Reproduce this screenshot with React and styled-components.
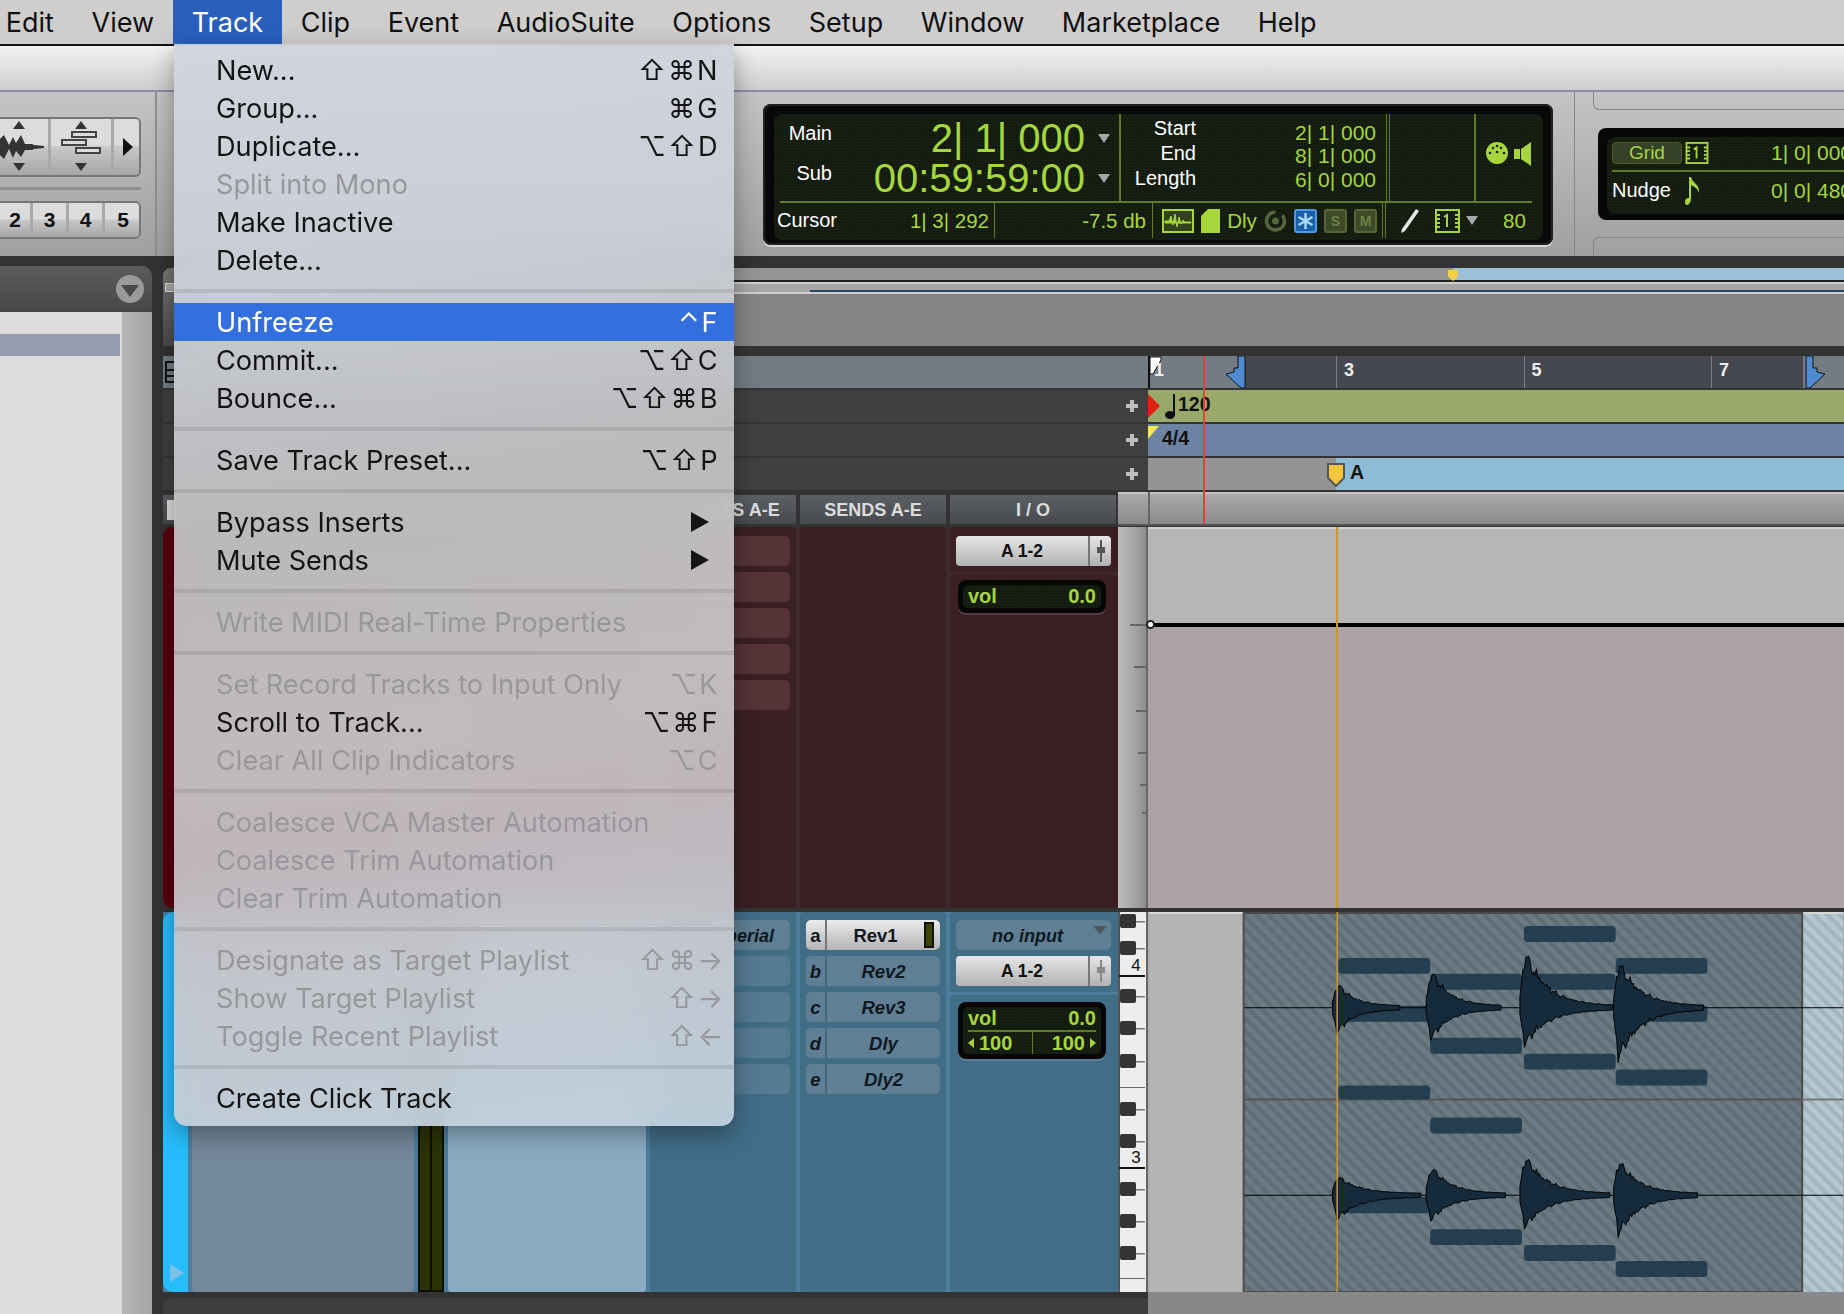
import React from "react";
import styled, { createGlobalStyle } from "styled-components";

const Global = createGlobalStyle`
  html, body { margin: 0; padding: 0; background: #333; }
  * { box-sizing: border-box; }
`;

const LCD_GREEN = "#a6d63c";
const LCD_RULE = "#5f7d1e";
const UI_FONT = `"Inter", "DejaVu Sans", sans-serif`;
const APP_FONT = `"Liberation Sans", Arial, sans-serif`;

const Page = styled.div`
  position: relative;
  width: 1844px;
  height: 1314px;
  overflow: hidden;
  display: flex;
  flex-direction: column;
  background: #333;
  font-family: ${APP_FONT};
`;

/* ---- mac menu bar ---- */
const MenuBar = styled.div`
  height: 46px;
  flex-shrink: 0;
  display: flex;
  margin-left: -13px;
  background: #cfcecd;
  border-bottom: 2px solid #111;
  font-family: ${UI_FONT};
  font-size: 27px;
  color: #111;
`;
const BarItem = styled.div`
  height: 44px;
  line-height: 45px;
  padding: 0 18.8px;
  background: ${(p) => (p.$open ? "#2a5fbd" : "transparent")};
  color: ${(p) => (p.$open ? "#fff" : "#111")};
`;
const TitleStrip = styled.div`
  height: 44px;
  flex-shrink: 0;
  background: linear-gradient(#f3f3f3, #cdcdcd);
`;

/* ---- the toolbar ---- */
const Toolbar = styled.div`
  height: 166px;
  flex-shrink: 0;
  display: flex;
  background: linear-gradient(#c4c4c4, #a0a0a0);
  border-top: 2px solid #8e8ea6;
`;
const Cluster = styled.div`
  width: 157px;
  flex-shrink: 0;
  padding: 25px 14px 0 0;
  border-right: 2px solid #8f8f8f;
  display: flex;
  flex-direction: column;
`;
const ButtonGroup = styled.div`
  display: flex;
  height: ${(p) => p.$h}px;
  border: 2px solid #777;
  border-left: 0;
  border-radius: 0 6px 6px 0;
  overflow: hidden;
`;
const ToolCell = styled.div`
  width: ${(p) => p.$w}px;
  flex-shrink: 0;
  display: flex;
  align-items: center;
  justify-content: ${(p) => (p.$start ? "flex-start" : "center")};
  background: linear-gradient(#dcdcdc 0 46%, #c8c8c8 50%, #a6a6a6);
  border-right: 3px solid #a9a9a9;
  font-size: 21px;
  font-weight: 700;
  color: #111;
  &:last-child { border-right: 0; }
`;
const ClusterRule = styled.div`
  height: 3px;
  margin: 10px 0 11px;
  background: #8f8f8f;
`;

const Counter = styled.div`
  width: 790px;
  height: 141px;
  margin: 12px 0 0 606px;
  flex-shrink: 0;
  padding: 10px 10px 5px 11px;
  background: #080808;
  border-radius: 8px;
  box-shadow: 0 2px 0 #d8d8d8, inset 0 0 0 2px #222;
`;
const LcdFace = styled.div`
  height: 100%;
  border-radius: 8px;
  color: ${LCD_GREEN};
  background-color: #141c10;
  background-image: radial-gradient(rgba(255, 255, 255, 0.05) 1px, transparent 1px);
  background-size: 3px 3px;
`;
const LcdTop = styled.div`
  display: flex;
  height: 89px;
  margin: 0 11px 0 6px;
  border-bottom: 2px solid ${LCD_RULE};
`;
const MainCol = styled.div`
  width: 341px;
  padding-top: 4px;
  border-right: 2px solid ${LCD_RULE};
`;
const MainRow = styled.div`
  display: flex;
  align-items: center;
  height: 40px;
  padding-right: 9px;
`;
const WhiteLabel = styled.div`
  width: ${(p) => p.$w}px;
  flex-shrink: 0;
  text-align: ${(p) => (p.$left ? "left" : "right")};
  font-size: 20px;
  color: #fff;
  margin-bottom: ${(p) => p.$up || 0}px;
`;
const BigValue = styled.div`
  flex: 1;
  text-align: right;
  font-size: 40px;
  white-space: nowrap;
`;
const DownTri = styled.div`
  width: 0;
  height: 0;
  flex-shrink: 0;
  margin-left: ${(p) => p.$ml ?? 13}px;
  border-left: 6px solid transparent;
  border-right: 6px solid transparent;
  border-top: 9px solid #a8a8a8;
`;
const StatCol = styled.div`
  width: 265px;
  padding: 7px 10px 0 0;
`;
const StatRow = styled.div`
  display: flex;
  align-items: center;
  height: 23.5px;
`;
const SmallValue = styled.div`
  flex: 1;
  text-align: right;
  font-size: 21px;
  white-space: nowrap;
`;
const EmptyCol = styled.div`
  width: 90px;
  border-left: 4px double ${LCD_RULE};
  border-right: 2px solid ${LCD_RULE};
`;
const MidiCol = styled.div`
  flex: 1;
  display: flex;
  align-items: flex-start;
  justify-content: flex-end;
  padding: 27px 0 0;
`;
const LcdBottom = styled.div`
  display: flex;
  align-items: center;
  height: 35px;
`;
const BottomCell = styled.div`
  width: ${(p) => p.$w}px;
  flex-shrink: 0;
  height: 100%;
  display: flex;
  align-items: center;
  justify-content: ${(p) => p.$justify || "space-between"};
  padding: ${(p) => p.$pad || "0 5px 0 3px"};
  border-right: ${(p) => (p.$rule ? `${p.$rule} ${LCD_RULE}` : "0")};
`;
const CursorLabel = styled.span`
  font-size: 20px;
  color: #fff;
`;
const CellText = styled.span`
  font-size: 20.5px;
  white-space: nowrap;
  margin-left: ${(p) => p.$ml || 0}px;
`;
const Spaced = styled.span`
  display: flex;
  margin-left: ${(p) => p.$ml || 0}px;
`;
const ModeBox = styled.div`
  width: 23px;
  height: 24px;
  display: flex;
  align-items: center;
  justify-content: center;
  flex-shrink: 0;
  border-radius: 3px;
  font-size: 14px;
  font-weight: 700;
  color: #6f8046;
  background: ${(p) => (p.$on ? "#1b5fa6" : "#3c4a28")};
  border: 2px solid ${(p) => (p.$on ? "#4a9be8" : "#56663a")};
`;

const ToolDivider = styled.div`
  width: 1px;
  margin-left: 21px;
  flex-shrink: 0;
  background: #868686;
`;
const RightCol = styled.div`
  width: 300px;
  margin-left: 18px;
  flex-shrink: 0;
  display: flex;
  flex-direction: column;
  justify-content: space-between;
`;
const Lip = styled.div`
  height: ${(p) => p.$h}px;
  border-left: 1px solid #868686;
  border-top: ${(p) => (p.$lower ? "1px solid #868686" : "0")};
  border-bottom: ${(p) => (p.$lower ? "0" : "1px solid #868686")};
  border-radius: ${(p) => (p.$lower ? "6px 0 0 0" : "0 0 0 6px")};
`;
const GridWell = styled.div`
  width: 270px;
  height: 92px;
  margin-left: 5px;
  padding: 9px 0 6px 9px;
  background: #080808;
  border-radius: 8px;
`;
const GridFace = styled(LcdFace)`
  padding: 0 16px 0 5px;
`;
const GridRow = styled.div`
  display: flex;
  align-items: center;
  gap: 2px;
  height: ${(p) => p.$h}px;
  border-bottom: ${(p) => (p.$rule ? `2px solid ${LCD_RULE}` : "0")};
`;
const GridPill = styled.div`
  width: 70px;
  height: 22px;
  line-height: 20px;
  text-align: center;
  font-size: 19px;
  border: 1px solid #4d5f2c;
  border-radius: 4px;
  background: #364228;
`;

/* ---- workspace ---- */
const Workspace = styled.div`
  flex: 1;
  display: flex;
  min-height: 0;
`;
const LeftPane = styled.div`
  width: 152px;
  flex-shrink: 0;
  padding-top: 10px;
  display: flex;
  flex-direction: column;
`;
const PaneHeader = styled.div`
  height: 46px;
  flex-shrink: 0;
  display: flex;
  align-items: center;
  justify-content: flex-end;
  padding-right: 7px;
  background: linear-gradient(#5c5c5c, #474747);
  border-radius: 0 10px 0 0;
`;
const PaneBody = styled.div`
  flex: 1;
  display: flex;
`;
const PaneList = styled.div`
  width: 122px;
  padding-top: 22px;
  background: #dcdcdc;
`;
const PaneRowSelected = styled.div`
  height: 22px;
  width: 120px;
  background: #949cae;
`;
const PaneGutter = styled.div`
  flex: 1;
  background: linear-gradient(90deg, #b4b4b4, #a6a6a6);
`;
const EditPane = styled.div`
  flex: 1;
  min-width: 0;
  padding: 12px 0 0 11px;
  display: flex;
  flex-direction: column;
`;
const TransportArea = styled.div`
  display: flex;
  height: 78px;
  flex-shrink: 0;
`;
const CornerBox = styled.div`
  width: 30px;
  flex-shrink: 0;
  padding: 15px 0 0 2px;
  background: linear-gradient(#777, #4a4a4a);
  border-radius: 8px 0 0 0;
`;
const CornerSwatch = styled.div`
  width: 14px;
  height: 9px;
  background: #a9a9a9;
  border: 1px solid #ddd;
`;
const TransportStack = styled.div`
  flex: 1;
  display: flex;
  flex-direction: column;
`;
const Overview = styled.div`
  height: 14px;
  flex-shrink: 0;
  display: flex;
  border-bottom: 2px solid #222;
`;
const OverviewPlain = styled.div`
  width: 1260px;
  background: #959595;
`;
const OverviewSel = styled.div`
  position: relative;
  flex: 1;
  background: #9cc0d8;
`;
const OverviewPin = styled.div`
  position: absolute;
  left: -5px;
  top: 2px;
  width: 10px;
  height: 11px;
  background: #f2cf45;
  clip-path: polygon(0 0, 100% 0, 100% 60%, 50% 100%, 0 60%);
`;
const ScrollStrip = styled.div`
  height: 12px;
  flex-shrink: 0;
  padding-left: 617px;
  border-top: 2px solid #cfcfcf;
  border-bottom: 2px solid #cfcfcf;
  background: #a6a6a6;
  display: flex;
  align-items: flex-end;
`;
const ScrollThumb = styled.div`
  flex: 1;
  height: 2px;
  background: #274a60;
`;
const GrayFill = styled.div`
  flex: 1;
  background: #848484;
`;
const RulerBlock = styled.div`
  position: relative;
  margin-top: 10px;
  flex-shrink: 0;
`;
const PlayLine = styled.div`
  position: absolute;
  left: 1040px;
  top: 0;
  bottom: 2px;
  width: 1.5px;
  background: #d9453a;
  z-index: 3;
`;
const RulerRow = styled.div`
  display: flex;
  height: 32px;
  margin-bottom: 2px;
`;
const RulerLabel = styled.div`
  width: 985px;
  flex-shrink: 0;
  display: flex;
  align-items: center;
  justify-content: flex-end;
  padding-right: 10px;
  background: ${(p) => p.$bg};
`;
const ViewGlyph = styled.div`
  width: 11px;
  height: 22px;
  margin: 0 auto 0 2px;
  border: 2px solid #111;
  background:
    linear-gradient(#111, #111) 0 6px / 100% 2px no-repeat,
    linear-gradient(#111, #111) 0 12px / 100% 2px no-repeat;
`;
const PlusMark = styled.div`
  width: 12px;
  height: 12px;
  background:
    linear-gradient(#bdbdbd, #bdbdbd) center / 12px 4px no-repeat,
    linear-gradient(#bdbdbd, #bdbdbd) center / 4px 12px no-repeat;
`;
const Lane = styled.div`
  position: relative;
  flex: 1;
  background: ${(p) => p.$bg};
  color: #111;
`;
const LaneFill = styled.div`
  position: absolute;
  top: 0;
  bottom: 0;
  left: ${(p) => p.$left}px;
  width: ${(p) => p.$w}px;
  background: ${(p) => p.$bg};
`;
const BarTick = styled.div`
  position: absolute;
  top: 0;
  bottom: 0;
  left: ${(p) => p.$left}px;
  padding: 4px 0 0 ${(p) => (p.$first ? 4 : 7)}px;
  border-left: ${(p) => (p.$first ? "0" : "1px solid #7a7f85")};
  font-size: 18px;
  font-weight: 700;
  color: #eee;
`;
const LaneText = styled.div`
  position: absolute;
  top: 3px;
  left: ${(p) => p.$left}px;
  font-size: 19.5px;
  font-weight: 700;
  color: #111;
`;
const LaneIcon = styled.svg`
  position: absolute;
  left: ${(p) => p.$left}px;
  top: ${(p) => p.$top}px;
`;

const HeaderRow = styled.div`
  display: flex;
  height: 34px;
`;
const HeaderCells = styled.div`
  width: 955px;
  flex-shrink: 0;
  display: flex;
  gap: 4px;
  padding: 3px 2px 2px 0;
  background: #333;
`;
const HeaderCell = styled.div`
  width: ${(p) => p.$w}px;
  flex: ${(p) => (p.$w ? "none" : 1)};
  display: flex;
  align-items: center;
  justify-content: center;
  padding-top: 1px;
  background: linear-gradient(#5c6064, #46494d);
  font-size: 18px;
  font-weight: 700;
  color: #dcdcdc;
`;
const HeaderBox = styled.div`
  width: 9px;
  height: 20px;
  margin-right: 8px;
  background: #ddd;
`;
const HeaderTimeline = styled.div`
  flex: 1;
  padding-left: 30px;
  background: linear-gradient(#c6c6c6 0 4%, #a9a9a9 8%, #8a8a8a);
  border-bottom: 2px solid #555;
`;
const HeaderTimelineInner = styled.div`
  height: 100%;
  border-left: 2px solid #666;
`;

const Tracks = styled.div`
  flex: 1;
  min-height: 0;
  display: flex;
  flex-direction: column;
  gap: 4px;
  margin-top: 1px;
`;
const TrackRow = styled.div`
  height: ${(p) => p.$h}px;
  flex-shrink: 0;
  display: flex;
`;
const Strip = styled.div`
  width: 955px;
  flex-shrink: 0;
  display: flex;
  gap: 4px;
  padding-right: 2px;
  background: ${(p) => p.$gap};
`;
const ColorTab = styled.div`
  position: relative;
  width: 25px;
  flex-shrink: 0;
  background: ${(p) => p.$bg};
  border-radius: 10px 0 0 10px;
`;
const TabArrow = styled.div`
  position: absolute;
  left: 7px;
  bottom: 10px;
  width: 0;
  height: 0;
  border-top: 9px solid transparent;
  border-bottom: 9px solid transparent;
  border-left: 14px solid #7cc0e8;
`;
const StripCol = styled.div`
  width: ${(p) => p.$w}px;
  flex: ${(p) => (p.$w ? "none" : 1)};
  display: flex;
  flex-direction: column;
  gap: 6px;
  padding: ${(p) => p.$pad || "0"};
  background: ${(p) => p.$bg};
  border-radius: 4px;
`;
const MeterCol = styled.div`
  width: 26px;
  flex-shrink: 0;
  display: flex;
  border: 2px solid #0c1000;
  background: #2a3308;
`;
const MeterDivider = styled.div`
  width: 2px;
  margin-left: 10px;
  background: #0c1000;
`;
const Slot = styled.div`
  height: 30px;
  flex-shrink: 0;
  padding-right: 16px;
  border-radius: 5px;
  background: ${(p) => p.$bg};
  text-align: right;
  line-height: 32px;
  font-size: 18px;
  font-weight: 700;
  font-style: italic;
  color: #101820;
`;
const SendRow = styled.div`
  height: 30px;
  flex-shrink: 0;
  display: flex;
  border-radius: 5px;
  overflow: hidden;
  background: ${(p) => (p.$on ? "linear-gradient(#ececec, #b4b4b4)" : "#5f7f94")};
  font-size: 18.5px;
  font-weight: 700;
  font-style: ${(p) => (p.$on ? "normal" : "italic")};
  color: #101820;
`;
const SendLetter = styled.div`
  width: 21px;
  flex-shrink: 0;
  text-align: center;
  line-height: 32px;
  border-right: 2px solid ${(p) => (p.$on ? "#777" : "#47677c")};
`;
const SendName = styled.div`
  flex: 1;
  text-align: center;
  line-height: 32px;
`;
const SendGauge = styled.div`
  width: 10px;
  margin: 2px 6px 2px 0;
  flex-shrink: 0;
  background: #3a4405;
  border: 2px solid #111;
`;
const IoStack = styled.div`
  width: 168px;
  flex-shrink: 0;
  display: flex;
  flex-direction: column;
  gap: 3px;
`;
const IoPanel = styled.div`
  flex: ${(p) => (p.$grow ? 1 : "none")};
  display: flex;
  flex-direction: column;
  gap: 6px;
  padding: ${(p) => p.$pad};
  background: ${(p) => p.$bg};
  border-radius: 4px;
`;
const InputCell = styled.div`
  position: relative;
  height: 30px;
  flex-shrink: 0;
  border-radius: 5px;
  background: #5f7f94;
  padding-right: 12px;
  text-align: center;
  line-height: 32px;
  font-size: 18px;
  font-weight: 700;
  font-style: italic;
  color: #101820;
`;
const InputTri = styled.div`
  position: absolute;
  top: 6px;
  right: 4px;
  width: 0;
  height: 0;
  border-left: 7px solid transparent;
  border-right: 7px solid transparent;
  border-top: 8px solid #444;
  opacity: 0.7;
`;
const OutputButton = styled.div`
  height: 30px;
  flex-shrink: 0;
  display: flex;
  border-radius: 4px;
  overflow: hidden;
  background: linear-gradient(#e6e6e6, #b2b2b2);
  font-size: 17.5px;
  font-weight: 700;
  color: #111;
`;
const OutputName = styled.div`
  flex: 1;
  text-align: center;
  line-height: 30px;
  border-right: 2px solid #777;
`;
const OutputFader = styled.div`
  width: 21px;
  display: flex;
  align-items: center;
  justify-content: center;
`;
const VolLcd = styled.div`
  width: 148px;
  margin-left: 2px;
  padding: 5px;
  flex-shrink: 0;
  background: #060606;
  border-radius: 8px;
  box-shadow: 0 2px 0 rgba(255, 255, 255, 0.14);
  font-size: 20px;
  font-weight: 700;
`;
const VolFace = styled(LcdFace)`
  padding: 0 5px;
  border-radius: 5px;
`;
const VolRow = styled.div`
  display: flex;
  align-items: center;
  justify-content: space-between;
  height: ${(p) => p.$h}px;
  border-top: ${(p) => (p.$rule ? `2px solid ${LCD_RULE}` : "0")};
`;
const PanSide = styled.div`
  flex: 1;
  display: flex;
  align-items: center;
  justify-content: ${(p) => (p.$right ? "flex-end" : "flex-start")};
  gap: 5px;
  height: 100%;
  border-left: ${(p) => (p.$right ? `1px solid ${LCD_RULE}` : "0")};
`;
const PanArrow = styled.span`
  width: 0;
  height: 0;
  border-top: 5px solid transparent;
  border-bottom: 5px solid transparent;
  border-left: ${(p) => (p.$right ? `6px solid ${LCD_GREEN}` : "0")};
  border-right: ${(p) => (p.$right ? "0" : `6px solid ${LCD_GREEN}`)};
`;
const SideColumn = styled.div`
  width: 30px;
  flex-shrink: 0;
  background: linear-gradient(90deg, #bdbdbd, #a9a9a9 50%, #8d8d8d);
  border-right: 2px solid #666;
`;
const KeysColumn = styled.div`
  width: 30px;
  flex-shrink: 0;
  background: #eee;
`;
const FlatSvg = styled.svg`
  display: block;
`;

const Playlist = styled.div`
  position: relative;
  flex: 1;
  display: flex;
  flex-direction: column;
  background: #aea1a6;
`;
const PlaylistTop = styled.div`
  height: 96px;
  background: #b6b6b6;
  border-top: 2px solid #d2d2d2;
`;
const AutoLine = styled.div`
  height: 4px;
  background: #000;
`;
const AutoDot = styled.div`
  position: absolute;
  left: -2px;
  top: 93px;
  width: 9px;
  height: 9px;
  border-radius: 50%;
  background: #fff;
  border: 2px solid #222;
`;
const BarLine = styled.div`
  position: absolute;
  left: 188px;
  top: 0;
  bottom: 0;
  width: 1.5px;
  background: #c9982e;
`;
const Footer = styled.div`
  height: 22px;
  flex-shrink: 0;
  display: flex;
`;
const FooterLeft = styled.div`
  width: 985px;
  margin-top: 6px;
  background: #3d3d3d;
  border-radius: 8px 0 0 0;
`;
const FooterRight = styled.div`
  flex: 1;
  background: #888;
`;

/* ---- the open menu ---- */
const Menu = styled.div`
  position: absolute;
  left: 174px;
  top: 44px;
  width: 560px;
  height: 1082px;
  padding: 7px 0 8px;
  z-index: 10;
  border-radius: 0 0 13px 13px;
  font-family: ${UI_FONT};
  font-size: 27.15px;
  background: linear-gradient(
    172deg,
    rgba(208, 212, 221, 0.94) 0%,
    rgba(204, 208, 216, 0.94) 22%,
    rgba(194, 194, 195, 0.94) 42%,
    rgba(201, 197, 199, 0.94) 62%,
    rgba(200, 192, 196, 0.94) 70%,
    rgba(200, 203, 210, 0.94) 84%,
    rgba(193, 210, 222, 0.94) 100%
  );
  backdrop-filter: blur(24px);
  box-shadow: 0 8px 24px rgba(0, 0, 0, 0.35);
`;
const MenuRow = styled.div`
  height: 38px;
  display: flex;
  align-items: center;
  justify-content: space-between;
  padding: 0 8.5px 0 42px;
  white-space: nowrap;
  color: ${(p) => (p.$active ? "#fff" : p.$off ? "#98989c" : "#141414")};
  background: ${(p) => (p.$active ? "#3470dd" : "transparent")};
`;
const Shortcut = styled.span`
  letter-spacing: 2px;
  padding-right: ${(p) => (p.$arrow ? 0 : 6)}px;
`;
const SubArrow = styled.span`
  width: 0;
  height: 0;
  margin-right: 16.5px;
  border-top: 10px solid transparent;
  border-bottom: 10px solid transparent;
  border-left: 18px solid #141414;
`;
const MenuSep = styled.div`
  height: 24px;
  display: flex;
  align-items: center;
  &::after {
    content: "";
    flex: 1;
    height: 4px;
    background: rgba(0, 0, 0, 0.09);
  }
`;

/* ---- drawings ---- */
const WaveIcon = () => (
  <svg width="48" height="56" viewBox="0 0 48 56">
    <path d="M13 10h12l-6-8zM13 44h12l-6 8z" fill="#333" />
    <path d="M-2 22L4 16L9 26L13 18L16 24L21 16L25 25L32 25L34 26L44 27L44 29L34 30L32 31L25 31L21 38L16 32L13 39L9 30L4 40L-2 34Z" fill="#333" />
  </svg>
);
const ArrangeIcon = () => (
  <svg width="60" height="56" viewBox="0 0 60 56">
    <path d="M24 10h12l-6-8zM24 44h12l-6 8z" fill="#333" />
    <g fill="#ddd" stroke="#444" strokeWidth="2">
      <rect x="21" y="13" width="24" height="5" />
      <rect x="11" y="21" width="24" height="5" />
      <rect x="25" y="29" width="24" height="5" />
    </g>
  </svg>
);
const PlayIcon = () => (
  <svg width="12" height="20" viewBox="0 0 12 20"><path d="M1 1l10 9-10 9z" fill="#111" /></svg>
);
const MidiIcon = () => (
  <svg width="24" height="24" viewBox="0 0 24 24">
    <circle cx="12" cy="12" r="11" fill={LCD_GREEN} />
    <g fill="#1a2410">
      <circle cx="5" cy="12" r="1.3" /><circle cx="19" cy="12" r="1.3" />
      <circle cx="8" cy="7" r="1.3" /><circle cx="16" cy="7" r="1.3" />
      <circle cx="12" cy="5" r="1.3" /><circle cx="12" cy="11" r="1.3" />
    </g>
  </svg>
);
const SpeakerIcon = () => (
  <Spaced $ml={5}>
    <svg width="18" height="26" viewBox="0 0 18 26">
      <path d="M0 8h6v10H0zM7 8L17 1v24L7 18z" fill={LCD_GREEN} />
    </svg>
  </Spaced>
);
const ClipWaveIcon = () => (
  <svg width="32" height="24" viewBox="0 0 32 24">
    <rect x="1" y="1" width="30" height="22" fill="#33421c" stroke={LCD_GREEN} strokeWidth="2" />
    <path d="M3 12h4l2-5 2 9 2-11 2 13 2-10 2 7 2-4 2 2h6v1H3z" fill={LCD_GREEN} stroke={LCD_GREEN} />
  </svg>
);
const DocIcon = () => (
  <svg width="19" height="24" viewBox="0 0 19 24"><path d="M7 0h12v24H0V7z" fill={LCD_GREEN} /></svg>
);
const TargetIcon = () => (
  <svg width="23" height="24" viewBox="0 0 23 24">
    <circle cx="11.5" cy="12" r="9" fill="none" stroke="#55663a" strokeWidth="3.5" strokeDasharray="42 8" />
    <circle cx="11.5" cy="12" r="3.5" fill="#55663a" />
  </svg>
);
const FreezeStar = () => (
  <svg width="17" height="18" viewBox="0 0 17 18">
    <path d="M8.5 1v16M1.500 5l14 8M15.500 5l-14 8" stroke="#a8dcff" strokeWidth="2.4" />
  </svg>
);
const PencilIcon = () => (
  <svg width="20" height="26" viewBox="0 0 20 26">
    <path d="M16 1l3 2L5 23l-4 2 1-4z" fill="#e6e6e6" />
  </svg>
);
const FilmIcon = ({ w = 25, h = 24 }) => (
  <svg width={w} height={h} viewBox="0 0 25 24">
    <rect x="1" y="1" width="23" height="22" fill="none" stroke={LCD_GREEN} strokeWidth="2" />
    <path d="M1 6h4M1 10h4M1 14h4M1 18h4M20 6h4M20 10h4M20 14h4M20 18h4M9 8l3-2v12" fill="none" stroke={LCD_GREEN} strokeWidth="2" />
  </svg>
);
const NoteIcon = () => (
  <Spaced $ml={10}>
    <svg width="17" height="30" viewBox="0 0 17 30">
      <path d="M7 1v21c0 4-2 7-4 7s-3-3-1-6c1-1 2-1 3-1V1zM7 1c1 6 9 7 8 16-1-4-4-6-8-8z" fill={LCD_GREEN} />
    </svg>
  </Spaced>
);
const FaderGlyph = ({ c = "#555" }) => (
  <svg width="10" height="22" viewBox="0 0 10 22"><path d="M5 0v22" stroke={c} strokeWidth="2" /><rect x="1" y="7" width="8" height="6" fill={c} /></svg>
);
const ChevronDisc = () => (
  <svg width="30" height="30" viewBox="0 0 30 30">
    <circle cx="15" cy="15" r="14" fill="#9a9a9a" />
    <path d="M6 11h18l-9 12z" fill="#4a4a4a" />
  </svg>
);

const CLIP_NOTES = [
  [190, 46, 16], [376, 14, 16], [468, 46, 16], [282, 62, 16], [376, 62, 16], [190, 94, 16], [468, 94, 16],
  [282, 126, 16], [376, 142, 16], [468, 158, 16], [190, 174, 14], [282, 206, 16], [190, 286, 16],
  [282, 318, 16], [376, 334, 16], [468, 350, 16],
];
const HITS = [
  [184, 96, 22, 22, 68], [278, 96, 34, 28, 76], [372, 96, 52, 34, 94], [466, 96, 42, 47, 90],
  [184, 284, 17, 21, 89], [278, 284, 26, 22, 80], [372, 284, 36, 29, 90], [466, 284, 32, 36, 84],
];
// one drum hit: sharp attack, then an exponential tail with some roughness
function hitPath([x0, cy, up, down, tail]) {
  const top = [];
  const bottom = [];
  const tau = tail / 4.2;
  for (let d = 0; d <= tail; d += 1.5) {
    const env = d < 5 ? (d + 1) / 6 : Math.exp(-(d - 5) / tau);
    const rough = 1 + 0.1 * Math.sin(d * 2.3 + x0) + 0.09 * Math.sin(d * 0.7 + cy) + 0.06 * Math.sin(d * 5.1);
    top.push(`${x0 + d},${(cy - (up * env * rough + 1.8)).toFixed(1)}`);
    bottom.unshift(`${x0 + d},${(cy + (down * env * (2 - rough) + 1.8)).toFixed(1)}`);
  }
  return `M${top.join("L")}L${bottom.join("L")}Z`;
}

const BLACK_KEYS = [10, 37, 85, 117, 150, 198, 230, 278, 310, 342];
const KEY_LINES = [63, 175, 255, 366];

const Keys = () => (
  <FlatSvg width="30" height="380" viewBox="0 0 30 380">
    <rect width="30" height="380" fill="#ededed" />
    <rect x="28" width="2" height="380" fill="#666" />
    <rect width="2" height="380" fill="#555" />
    {KEY_LINES.map((y, i) => (
      <rect key={i} x="1" y={y} width="26" height={i % 2 === 0 ? 2 : 1} fill={i % 2 === 0 ? "#111" : "#666"} />
    ))}
    {BLACK_KEYS.map((y) => (
      <g key={y}>
        <rect x="18" y={y - 1} width="9" height="1.500" fill="#777" />
        <rect x="2" y={y - 8} width="16" height={14} rx="2" fill="#333" />
      </g>
    ))}
    <text x="18" y="59" fontSize="17" textAnchor="middle" fontFamily="Liberation Sans" fill="#111">4</text>
    <text x="18" y="251" fontSize="17" textAnchor="middle" fontFamily="Liberation Sans" fill="#111">3</text>
  </FlatSvg>
);

const ClipView = () => (
  <FlatSvg width="696" height="381" viewBox="0 0 696 381">
    <defs>
      <pattern id="hatchDark" width="9" height="9" patternUnits="userSpaceOnUse" patternTransform="rotate(-45)">
        <rect width="9" height="9" fill="#6b7a83" />
        <rect width="4" height="9" fill="#5f6d76" />
      </pattern>
      <pattern id="hatchLight" width="9" height="9" patternUnits="userSpaceOnUse" patternTransform="rotate(-45)">
        <rect width="9" height="9" fill="#b5c7cf" />
        <rect width="4" height="9" fill="#a0b6c0" />
      </pattern>
    </defs>
    <rect width="696" height="381" fill="#b4b4b4" />
    <rect width="696" height="2" fill="#d8d8d8" />
    <rect x="655" y="2" width="41" height="379" fill="url(#hatchLight)" />
    <rect x="95" y="1" width="560" height="380" fill="url(#hatchDark)" stroke="#4a4a4a" strokeWidth="2" />
    <rect x="655" y="187" width="41" height="2" fill="#777" />
    <rect x="96" y="187" width="559" height="2" fill="#555" />
    {CLIP_NOTES.map(([x, y, h], i) => (
      <rect key={i} x={x} y={y} width="92" height={h} rx="4" fill="#1f3a4d" opacity="0.92" />
    ))}
    <path d="M96 96H696M96 284H696" stroke="#000" strokeWidth="1" />
    {HITS.map((h, i) => (
      <path key={i} d={hitPath(h)} fill="#152b3b" stroke="#000" strokeWidth="1" />
    ))}
    <rect x="188" y="0" width="1.500" height="381" fill="#c9982e" />
  </FlatSvg>
);

const MENU = [
  [["New...", "⇧⌘N"], ["Group...", "⌘G"], ["Duplicate...", "⌥⇧D"], ["Split into Mono", "", "off"], ["Make Inactive"], ["Delete..."]],
  [["Unfreeze", "⌃F", "active"], ["Commit...", "⌥⇧C"], ["Bounce...", "⌥⇧⌘B"]],
  [["Save Track Preset...", "⌥⇧P"]],
  [["Bypass Inserts", ">"], ["Mute Sends", ">"]],
  [["Write MIDI Real-Time Properties", "", "off"]],
  [["Set Record Tracks to Input Only", "⌥K", "off"], ["Scroll to Track...", "⌥⌘F"], ["Clear All Clip Indicators", "⌥C", "off"]],
  [["Coalesce VCA Master Automation", "", "off"], ["Coalesce Trim Automation", "", "off"], ["Clear Trim Automation", "", "off"]],
  [["Designate as Target Playlist", "⇧⌘→", "off"], ["Show Target Playlist", "⇧→", "off"], ["Toggle Recent Playlist", "⇧←", "off"]],
  [["Create Click Track"]],
];
const BAR = ["Edit", "View", "Track", "Clip", "Event", "AudioSuite", "Options", "Setup", "Window", "Marketplace", "Help"];
const SENDS = [["a", "Rev1"], ["b", "Rev2"], ["c", "Rev3"], ["d", "Dly"], ["e", "Dly2"]];

const TrackMenu = () => (
  <Menu>
    {MENU.map((group, g) => (
      <React.Fragment key={g}>
        {g > 0 && <MenuSep />}
        {group.map(([label, keys, state]) => (
          <MenuRow key={label} $off={state === "off"} $active={state === "active"}>
            <span>{label}</span>
            {keys === ">" ? <SubArrow /> : keys ? <Shortcut $arrow={/[→←]/.test(keys)}>{keys}</Shortcut> : null}
          </MenuRow>
        ))}
      </React.Fragment>
    ))}
  </Menu>
);

const MainCounter = () => (
  <Counter>
    <LcdFace>
      <LcdTop>
        <MainCol>
          <MainRow>
            <WhiteLabel $w={52} $up={10}>Main</WhiteLabel>
            <BigValue>2| 1| 000</BigValue>
            <DownTri />
          </MainRow>
          <MainRow>
            <WhiteLabel $w={52} $up={10}>Sub</WhiteLabel>
            <BigValue>00:59:59:00</BigValue>
            <DownTri />
          </MainRow>
        </MainCol>
        <StatCol>
          <StatRow><WhiteLabel $w={75} $up={8}>Start</WhiteLabel><SmallValue>2| 1| 000</SmallValue></StatRow>
          <StatRow><WhiteLabel $w={75} $up={6}>End</WhiteLabel><SmallValue>8| 1| 000</SmallValue></StatRow>
          <StatRow><WhiteLabel $w={75} $up={2}>Length</WhiteLabel><SmallValue>6| 0| 000</SmallValue></StatRow>
        </StatCol>
        <EmptyCol />
        <MidiCol><MidiIcon /><SpeakerIcon /></MidiCol>
      </LcdTop>
      <LcdBottom>
        <BottomCell $w={221} $rule="1px solid">
          <CursorLabel>Cursor</CursorLabel>
          <CellText>1| 3| 292</CellText>
        </BottomCell>
        <BottomCell $w={158} $rule="1px solid" $pad="0 6px 0 0" $justify="flex-end">
          <CellText>-7.5 db</CellText>
        </BottomCell>
        <BottomCell $w={233} $rule="4px double" $pad="0 5px 0 9px">
          <ClipWaveIcon />
          <DocIcon />
          <CellText>Dly</CellText>
          <TargetIcon />
          <ModeBox $on><FreezeStar /></ModeBox>
          <ModeBox>S</ModeBox>
          <ModeBox>M</ModeBox>
        </BottomCell>
        <BottomCell $w={157} $pad="0 0 0 14px" $justify="flex-start">
          <PencilIcon />
          <Spaced $ml={15}><FilmIcon /></Spaced>
          <DownTri $ml={6} />
          <CellText $ml={25}>80</CellText>
        </BottomCell>
      </LcdBottom>
    </LcdFace>
  </Counter>
);

const GridPanel = () => (
  <GridWell>
    <GridFace>
      <GridRow $h={35} $rule>
        <GridPill>Grid</GridPill>
        <FilmIcon w={26} h={22} />
        <SmallValue>1| 0| 000</SmallValue>
      </GridRow>
      <GridRow $h={38}>
        <WhiteLabel $w={60} $left>Nudge</WhiteLabel>
        <NoteIcon />
        <SmallValue>0| 0| 480</SmallValue>
      </GridRow>
    </GridFace>
  </GridWell>
);

const RedTrack = () => (
  <TrackRow $h={381}>
    <Strip $gap="#3e2a2c">
      <ColorTab $bg="#5a0010" />
      <StripCol $w={222} $bg="#3a1f23" />
      <StripCol $w={26} $bg="#3a1f23" />
      <StripCol $w={198} $bg="#3a1f23" />
      <StripCol $w={146} $bg="#3a1f23" $pad="9px 6px 0 6px">
        {[0, 1, 2, 3, 4].map((i) => <Slot key={i} $bg="#553337" />)}
      </StripCol>
      <StripCol $w={146} $bg="#3a1f23" />
      <IoStack>
        <IoPanel $bg="#3a1f23" $pad="9px 7px 6px 6px">
          <OutputButton>
            <OutputName>A 1-2</OutputName>
            <OutputFader><FaderGlyph /></OutputFader>
          </OutputButton>
        </IoPanel>
        <IoPanel $grow $bg="#3a1f23" $pad="5px 5px 0 6px">
          <VolLcd>
            <VolFace><VolRow $h={23}><span>vol</span><span>0.0</span></VolRow></VolFace>
          </VolLcd>
        </IoPanel>
      </IoStack>
    </Strip>
    <SideColumn>
      <svg width="28" height="381" viewBox="0 0 28 381">
        <path d="M12 98h16M16 140h12M18 184h10M20 226h8M22 258h6M24 286h4" stroke="#666" strokeWidth="2" />
      </svg>
    </SideColumn>
    <Playlist>
      <PlaylistTop />
      <AutoLine />
      <AutoDot />
      <BarLine />
    </Playlist>
  </TrackRow>
);

const BlueTrack = () => (
  <TrackRow $h={380}>
    <Strip $gap="#4c7d9c">
      <ColorTab $bg="#27bdfd"><TabArrow /></ColorTab>
      <StripCol $w={222} $bg="#73889a" />
      <MeterCol><MeterDivider /></MeterCol>
      <StripCol $w={198} $bg="#8aacc2" />
      <StripCol $w={146} $bg="#416d87" $pad="8px 6px 0 6px">
        <Slot $bg="#5f7f94">Imperial</Slot>
        {[0, 1, 2, 3].map((i) => <Slot key={i} $bg="#557a92" />)}
      </StripCol>
      <StripCol $w={146} $bg="#416d87" $pad="8px 6px 0 6px">
        {SENDS.map(([letter, name], i) => (
          <SendRow key={letter} $on={i === 0}>
            <SendLetter $on={i === 0}>{letter}</SendLetter>
            <SendName>{name}</SendName>
            {i === 0 && <SendGauge />}
          </SendRow>
        ))}
      </StripCol>
      <IoStack>
        <IoPanel $bg="#416d87" $pad="8px 7px 6px 6px">
          <InputCell>no input<InputTri /></InputCell>
          <OutputButton>
            <OutputName>A 1-2</OutputName>
            <OutputFader><FaderGlyph c="#888" /></OutputFader>
          </OutputButton>
        </IoPanel>
        <IoPanel $grow $bg="#416d87" $pad="7px 5px 0 6px">
          <VolLcd>
            <VolFace>
              <VolRow $h={23}><span>vol</span><span>0.0</span></VolRow>
              <VolRow $h={24} $rule>
                <PanSide><PanArrow /><span>100</span></PanSide>
                <PanSide $right><span>100</span><PanArrow $right /></PanSide>
              </VolRow>
            </VolFace>
          </VolLcd>
        </IoPanel>
      </IoStack>
    </Strip>
    <KeysColumn><Keys /></KeysColumn>
    <Playlist><ClipView /></Playlist>
  </TrackRow>
);

const App = () => (
  <Page>
    <Global />
    <MenuBar>
      {BAR.map((name) => <BarItem key={name} $open={name === "Track"}>{name}</BarItem>)}
    </MenuBar>
    <TitleStrip />
    <Toolbar>
      <Cluster>
        <ButtonGroup $h={60}>
          <ToolCell $w={51} $start><WaveIcon /></ToolCell>
          <ToolCell $w={63}><ArrangeIcon /></ToolCell>
          <ToolCell $w={27}><PlayIcon /></ToolCell>
        </ButtonGroup>
        <ClusterRule />
        <ButtonGroup $h={38}>
          <ToolCell $w={33}>2</ToolCell>
          <ToolCell $w={36}>3</ToolCell>
          <ToolCell $w={36}>4</ToolCell>
          <ToolCell $w={36}>5</ToolCell>
        </ButtonGroup>
      </Cluster>
      <MainCounter />
      <ToolDivider />
      <RightCol>
        <Lip $h={18} />
        <GridPanel />
        <Lip $h={19} $lower />
      </RightCol>
    </Toolbar>
    <Workspace>
      <LeftPane>
        <PaneHeader><ChevronDisc /></PaneHeader>
        <PaneBody>
          <PaneList><PaneRowSelected /></PaneList>
          <PaneGutter />
        </PaneBody>
      </LeftPane>
      <EditPane>
        <TransportArea>
          <CornerBox><CornerSwatch /></CornerBox>
          <TransportStack>
            <Overview>
              <OverviewPlain />
              <OverviewSel><OverviewPin /></OverviewSel>
            </Overview>
            <ScrollStrip><ScrollThumb /></ScrollStrip>
            <GrayFill />
          </TransportStack>
        </TransportArea>
        <RulerBlock>
          <PlayLine />
          <RulerRow>
            <RulerLabel $bg="#737c85"><ViewGlyph /></RulerLabel>
            <Lane $bg="#737c85">
              <LaneFill $left={95} $w={560} $bg="#45494f" />
              <LaneIcon $left={0} $top={0} width="14" height="32" viewBox="0 0 14 32">
                <path d="M0 0h2v32H0z" fill="#111" />
                <path d="M2 1h11v3L5 18H2z" fill="#fff" stroke="#111" />
              </LaneIcon>
              <BarTick $first $left={2}>1</BarTick>
              <BarTick $left={188}>3</BarTick>
              <BarTick $left={375.500}>5</BarTick>
              <BarTick $left={563}>7</BarTick>
              <LaneIcon $left={76} $top={0} width="22" height="32" viewBox="0 0 22 32">
                <path d="M14 0h7v32h-4L2 18l8-2V12h4z" fill="#4f8bd0" stroke="#111" />
              </LaneIcon>
              <LaneIcon $left={657} $top={0} width="22" height="32" viewBox="0 0 22 32">
                <path d="M1 0h7v12h4v4l8 2L5 32H1z" fill="#4f8bd0" stroke="#111" />
              </LaneIcon>
            </Lane>
          </RulerRow>
          <RulerRow>
            <RulerLabel $bg="#404040"><PlusMark /></RulerLabel>
            <Lane $bg="#9aa96a">
              <LaneIcon $left={0} $top={4} width="14" height="24" viewBox="0 0 14 24"><path d="M0 0l12 12L0 24z" fill="#e02010" /></LaneIcon>
              <LaneIcon $left={16} $top={4} width="12" height="26" viewBox="0 0 12 26">
                <path d="M9 0h2v21H9z" fill="#111" />
                <ellipse cx="6" cy="21" rx="5" ry="4" fill="#111" />
              </LaneIcon>
              <LaneText $left={30}>120</LaneText>
            </Lane>
          </RulerRow>
          <RulerRow>
            <RulerLabel $bg="#404040"><PlusMark /></RulerLabel>
            <Lane $bg="#6d83a3">
              <LaneIcon $left={0} $top={2} width="12" height="14" viewBox="0 0 12 14"><path d="M0 0h11L0 13z" fill="#f6e84a" /></LaneIcon>
              <LaneText $left={14}>4/4</LaneText>
            </Lane>
          </RulerRow>
          <RulerRow>
            <RulerLabel $bg="#404040"><PlusMark /></RulerLabel>
            <Lane $bg="#949494">
              <LaneFill $left={188} $w={508} $bg="#8dbcd6" />
              <LaneIcon $left={179} $top={5} width="18" height="24" viewBox="0 0 18 24">
                <path d="M1 1h16v14l-8 8-8-8z" fill="#f5c53b" stroke="#555" strokeWidth="2" />
              </LaneIcon>
              <LaneText $left={202}>A</LaneText>
            </Lane>
          </RulerRow>
          <HeaderRow>
            <HeaderCells>
              <HeaderCell $w={25}><HeaderBox /></HeaderCell>
              <HeaderCell $w={222} />
              <HeaderCell $w={26} />
              <HeaderCell $w={198} />
              <HeaderCell $w={146}>INSERTS A-E</HeaderCell>
              <HeaderCell $w={146}>SENDS A-E</HeaderCell>
              <HeaderCell>I / O</HeaderCell>
            </HeaderCells>
            <HeaderTimeline><HeaderTimelineInner /></HeaderTimeline>
          </HeaderRow>
        </RulerBlock>
        <Tracks>
          <RedTrack />
          <BlueTrack />
        </Tracks>
        <Footer>
          <FooterLeft />
          <FooterRight />
        </Footer>
      </EditPane>
    </Workspace>
    <TrackMenu />
  </Page>
);

export default App;
